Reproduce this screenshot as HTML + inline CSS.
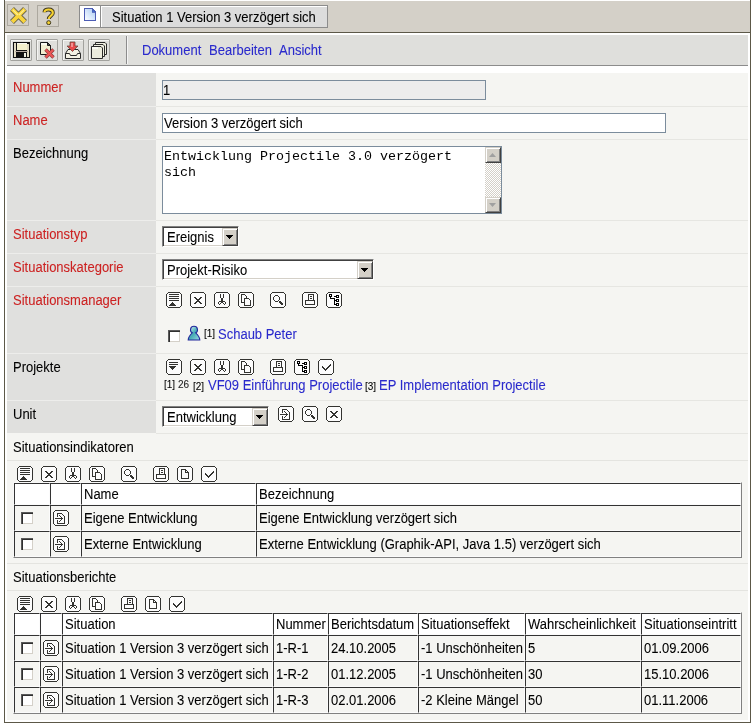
<!DOCTYPE html><html><head><meta charset="utf-8"><style>
html,body{margin:0;padding:0;}
body{width:756px;height:726px;position:relative;overflow:hidden;background:#fff;font-family:"Liberation Sans",sans-serif;font-size:13px;}
div{position:absolute;box-sizing:border-box;}
.t{white-space:nowrap;line-height:16px;will-change:transform;-webkit-text-stroke:0.08px currentColor;transform:scaleY(1.07);transform-origin:0 12px;}
.cb{width:12px;height:12px;background:#fff;border-top:1px solid #5a5a5a;border-left:1px solid #5a5a5a;box-shadow:inset 1px 1px 0 #303030, inset -1px -1px 0 #d4d0c8;}
</style></head><body>
<div style="left:4px;top:0px;width:747px;height:723px;border-left:1px solid #5c5848;border-right:1px solid #5c5848;border-bottom:1px solid #5c5848;"></div>
<div style="left:5px;top:1px;width:745px;height:31px;background:#d4d0c8;"></div>
<div style="left:5px;top:32px;width:745px;height:1px;background:#5c5848;"></div>
<div style="left:7px;top:4px;width:22px;height:22px;border:1px solid #aca89f;"></div>
<svg style="position:absolute;left:10px;top:7px;" width="17" height="17" viewBox="0 0 17 17"><path d="M2 2L15 15M15 2L2 15" stroke="#66604a" stroke-width="5.6"/><path d="M2.2 2.2L14.8 14.8M14.8 2.2L2.2 14.8" stroke="#f8d43c" stroke-width="3.8"/><path d="M3 3L8 8M14 3L9 8" stroke="#fcec90" stroke-width="1.2"/></svg>
<div style="left:37px;top:5px;width:22px;height:22px;border:1px solid #aca89f;"></div>
<svg style="position:absolute;left:39px;top:7px;" width="18" height="18" viewBox="0 0 18 18"><path d="M5.5 5.2C5.5 3.2 7.5 2.5 9.5 2.5S13.8 3.3 13.8 6C13.8 8.6 9.8 9 9.8 12" fill="none" stroke="#3e3820" stroke-width="4"/><path d="M5.5 5.2C5.5 3.2 7.5 2.5 9.5 2.5S13.8 3.3 13.8 6C13.8 8.6 9.8 9 9.8 12" fill="none" stroke="#f6d232" stroke-width="2.2"/><circle cx="9.7" cy="15.7" r="2" fill="#f6d232" stroke="#3e3820" stroke-width="1"/></svg>
<div style="left:79px;top:5px;width:249px;height:23px;border:1px solid #8c8c8c;background:#fff;"></div>
<div style="left:100px;top:6px;width:1px;height:21px;background:#8c8c8c;"></div>
<div style="left:102px;top:7px;width:225px;height:20px;background:#dcdcdc;"></div>
<svg style="position:absolute;left:84px;top:8px;shape-rendering:crispEdges" width="12" height="13" viewBox="0 0 12 13"><defs><linearGradient id="dg" x1="0" y1="1" x2="1" y2="0"><stop offset="0" stop-color="#ffffff"/><stop offset=".45" stop-color="#d8e8fc"/><stop offset="1" stop-color="#a8c8f0"/></linearGradient></defs><path d="M.5 .5h7.5l3.5 3.5v8.5h-11z" fill="url(#dg)" stroke="#4c5cb4"/><path d="M8 .5v3.5h3.5z" fill="#3a74d8" stroke="#4c5cb4" stroke-width=".8"/></svg>
<div class="t" style="left:112px;top:10px;color:#000;font-size:13px;">Situation 1 Version 3 verzögert sich</div>
<div style="left:7px;top:35px;width:741px;height:30px;background:#dfdfdc;"></div>
<div style="left:7px;top:65px;width:741px;height:1px;background:#8c8c8c;"></div>
<div style="left:10px;top:39px;width:22px;height:22px;border:1px solid #a2a29e;border-radius:1px;box-shadow:inset 1px 1px 0 #f4f4f2;"></div>
<div style="left:36px;top:39px;width:22px;height:22px;border:1px solid #a2a29e;border-radius:1px;box-shadow:inset 1px 1px 0 #f4f4f2;"></div>
<div style="left:62px;top:39px;width:22px;height:22px;border:1px solid #a2a29e;border-radius:1px;box-shadow:inset 1px 1px 0 #f4f4f2;"></div>
<div style="left:88px;top:39px;width:22px;height:22px;border:1px solid #a2a29e;border-radius:1px;box-shadow:inset 1px 1px 0 #f4f4f2;"></div>
<svg style="position:absolute;left:13px;top:42px;shape-rendering:crispEdges" width="17" height="16" viewBox="0 0 17 16"><rect x="0" y="0" width="17" height="16" fill="#111"/><rect x="1" y="1" width="2" height="14" fill="#e2dcc4"/><rect x="14" y="2" width="2" height="13" fill="#e2dcc4"/><rect x="4" y="1" width="10" height="7" fill="#f4f0cc"/><rect x="4" y="1" width="10" height="1" fill="#fcfcf4"/><rect x="2" y="9" width="13" height="1" fill="#b8aca4"/><rect x="11" y="11" width="2" height="4" fill="#f0f0e4"/></svg>
<svg style="position:absolute;left:37px;top:40px;" width="21" height="21" viewBox="0 0 21 21"><path d="M3.5 2.5h7l3 3v9h-10z" fill="#f2eed0" stroke="#1a1a1a"/><path d="M4 3h6v2H4z" fill="#fafaf0"/><path d="M10.5 2.5v3h3z" fill="#555" stroke="#1a1a1a"/><path d="M8.5 9.5l8 8M16.5 9.5l-8 8" stroke="#8a3a3a" stroke-width="3.4"/><path d="M8.8 9.8l7.4 7.4M16.2 9.8l-7.4 7.4" stroke="#ec5656" stroke-width="2.2"/></svg>
<svg style="position:absolute;left:63px;top:40px;" width="21" height="21" viewBox="0 0 21 21"><path d="M2.5 13.5L5 9.5H15L17.5 13.5V18.5H2.5z" fill="#f4f2e4" stroke="#2a2a2a"/><path d="M2.5 13.5H6.5L7.5 15.5H13.5L14.5 13.5H17.5" fill="none" stroke="#2a2a2a"/><path d="M7 2H12V6H15L9.5 11.5L4 6H7z" fill="#e84a4a" stroke="#6a4a40" stroke-width=".8"/><path d="M8 3H10V7H8z" fill="#f49090"/></svg>
<svg style="position:absolute;left:89px;top:40px;" width="21" height="21" viewBox="0 0 21 21"><path d="M6.5 2.5H16L17.5 4V14.5H6.5z" fill="#eeeee0" stroke="#2a2a2a"/><path d="M4.5 4.5H14L15.5 6V16.5H4.5z" fill="#eeeee0" stroke="#2a2a2a"/><path d="M2.5 6.5H12L13.5 8V18.5H2.5z" fill="#ebebdc" stroke="#2a2a2a"/><path d="M3 7H9V9H3z" fill="#fafaf4"/></svg>
<div style="left:126px;top:36px;width:1px;height:28px;background:#8c8c8c;"></div>
<div style="left:127px;top:36px;width:1px;height:28px;background:#f4f4f4;"></div>
<div class="t" style="left:142px;top:43px;color:#2a2acc;font-size:13px;">Dokument</div>
<div class="t" style="left:209px;top:43px;color:#2a2acc;font-size:13px;">Bearbeiten</div>
<div class="t" style="left:279px;top:43px;color:#2a2acc;font-size:13px;">Ansicht</div>
<div style="left:7px;top:73px;width:741px;height:360px;background:#e6e6e2;"></div>
<div style="left:7px;top:73px;width:149px;height:33px;background:#e0e0de;"></div>
<div style="left:156px;top:73px;width:592px;height:33px;background:#f5f5f2;"></div>
<div style="left:7px;top:107px;width:149px;height:32px;background:#e0e0de;"></div>
<div style="left:156px;top:107px;width:592px;height:32px;background:#f5f5f2;"></div>
<div style="left:7px;top:140px;width:149px;height:80px;background:#e0e0de;"></div>
<div style="left:156px;top:140px;width:592px;height:80px;background:#f5f5f2;"></div>
<div style="left:7px;top:221px;width:149px;height:32px;background:#e0e0de;"></div>
<div style="left:156px;top:221px;width:592px;height:32px;background:#f5f5f2;"></div>
<div style="left:7px;top:254px;width:149px;height:32px;background:#e0e0de;"></div>
<div style="left:156px;top:254px;width:592px;height:32px;background:#f5f5f2;"></div>
<div style="left:7px;top:287px;width:149px;height:66px;background:#e0e0de;"></div>
<div style="left:156px;top:287px;width:592px;height:66px;background:#f5f5f2;"></div>
<div style="left:7px;top:354px;width:149px;height:46px;background:#e0e0de;"></div>
<div style="left:156px;top:354px;width:592px;height:46px;background:#f5f5f2;"></div>
<div style="left:7px;top:401px;width:149px;height:32px;background:#e0e0de;"></div>
<div style="left:156px;top:401px;width:592px;height:32px;background:#f5f5f2;"></div>
<div style="left:7px;top:106px;width:149px;height:1px;background:#ededeb;"></div>
<div style="left:7px;top:139px;width:149px;height:1px;background:#ededeb;"></div>
<div style="left:7px;top:220px;width:149px;height:1px;background:#ededeb;"></div>
<div style="left:7px;top:253px;width:149px;height:1px;background:#ededeb;"></div>
<div style="left:7px;top:286px;width:149px;height:1px;background:#ededeb;"></div>
<div style="left:7px;top:353px;width:149px;height:1px;background:#ededeb;"></div>
<div style="left:7px;top:400px;width:149px;height:1px;background:#ededeb;"></div>
<div class="t" style="left:13px;top:80px;color:#cc2222;font-size:13px;">Nummer</div>
<div class="t" style="left:13px;top:113px;color:#cc2222;font-size:13px;">Name</div>
<div class="t" style="left:13px;top:146px;color:#000;font-size:13px;">Bezeichnung</div>
<div class="t" style="left:13px;top:227px;color:#cc2222;font-size:13px;">Situationstyp</div>
<div class="t" style="left:13px;top:260px;color:#cc2222;font-size:13px;">Situationskategorie</div>
<div class="t" style="left:13px;top:293px;color:#cc2222;font-size:13px;">Situationsmanager</div>
<div class="t" style="left:13px;top:360px;color:#000;font-size:13px;">Projekte</div>
<div class="t" style="left:13px;top:407px;color:#000;font-size:13px;">Unit</div>
<div style="left:162px;top:80px;width:324px;height:20px;border:1px solid #7b8c9c;background:#ececec;"></div>
<div class="t" style="left:163px;top:83px;color:#000;font-size:13px;">1</div>
<div style="left:162px;top:113px;width:504px;height:20px;border:1px solid #7b8c9c;background:#fff;"></div>
<div class="t" style="left:164px;top:116px;color:#000;font-size:13px;">Version 3 verzögert sich</div>
<div style="left:162px;top:146px;width:340px;height:68px;border:1px solid #7b8c9c;background:#fff;"></div>
<div style="left:164px;top:149px;will-change:transform;font-family:'Liberation Mono',monospace;font-size:13.33px;line-height:16px;white-space:pre;">Entwicklung Projectile 3.0 verzögert
sich</div>
<div style="left:485px;top:147px;width:16px;height:66px;background:repeating-conic-gradient(#d4d0c8 0 25%, #fff 0 50%) 0 0/2px 2px;"></div>
<div style="left:485px;top:147px;width:16px;height:16px;background:#d4d0c8;border-top:1px solid #d4d0c8;border-left:1px solid #d4d0c8;border-right:1px solid #404040;border-bottom:1px solid #404040;box-shadow:inset 1px 1px 0 #fff, inset -1px -1px 0 #808080;"></div>
<svg style="position:absolute;left:485px;top:147px;" width="16" height="16" viewBox="0 0 16 16"><path d="M4 10h7l-3.5-4z" fill="#a0a0a0"/></svg>
<div style="left:485px;top:197px;width:16px;height:16px;background:#d4d0c8;border-top:1px solid #d4d0c8;border-left:1px solid #d4d0c8;border-right:1px solid #404040;border-bottom:1px solid #404040;box-shadow:inset 1px 1px 0 #fff, inset -1px -1px 0 #808080;"></div>
<svg style="position:absolute;left:485px;top:197px;" width="16" height="16" viewBox="0 0 16 16"><path d="M4 6h7l-3.5 4z" fill="#a0a0a0"/></svg>
<div style="left:162px;top:226px;width:77px;height:21px;background:#fff;border-top:1px solid #808080;border-left:1px solid #808080;border-right:1px solid #fff;border-bottom:1px solid #fff;box-shadow:inset 1px 1px 0 #404040, inset -1px -1px 0 #d4d0c8;"></div>
<div style="left:222px;top:228px;width:16px;height:18px;background:#d4d0c8;border-right:1px solid #404040;border-bottom:1px solid #404040;border-top:1px solid #d4d0c8;border-left:1px solid #d4d0c8;box-shadow:inset 1px 1px 0 #fff, inset -1px -1px 0 #808080;"></div>
<svg style="position:absolute;left:222px;top:228px;shape-rendering:crispEdges" width="16" height="18" viewBox="0 0 16 18"><path d="M4 7h7l-3.5 4z" fill="#000"/></svg>
<div class="t" style="left:167px;top:230px;color:#000;font-size:13px;">Ereignis</div>
<div style="left:162px;top:259px;width:212px;height:21px;background:#fff;border-top:1px solid #808080;border-left:1px solid #808080;border-right:1px solid #fff;border-bottom:1px solid #fff;box-shadow:inset 1px 1px 0 #404040, inset -1px -1px 0 #d4d0c8;"></div>
<div style="left:357px;top:261px;width:16px;height:18px;background:#d4d0c8;border-right:1px solid #404040;border-bottom:1px solid #404040;border-top:1px solid #d4d0c8;border-left:1px solid #d4d0c8;box-shadow:inset 1px 1px 0 #fff, inset -1px -1px 0 #808080;"></div>
<svg style="position:absolute;left:357px;top:261px;shape-rendering:crispEdges" width="16" height="18" viewBox="0 0 16 18"><path d="M4 7h7l-3.5 4z" fill="#000"/></svg>
<div class="t" style="left:167px;top:263px;color:#000;font-size:13px;">Projekt-Risiko</div>
<div style="left:162px;top:406px;width:107px;height:21px;background:#fff;border-top:1px solid #808080;border-left:1px solid #808080;border-right:1px solid #fff;border-bottom:1px solid #fff;box-shadow:inset 1px 1px 0 #404040, inset -1px -1px 0 #d4d0c8;"></div>
<div style="left:252px;top:408px;width:16px;height:18px;background:#d4d0c8;border-right:1px solid #404040;border-bottom:1px solid #404040;border-top:1px solid #d4d0c8;border-left:1px solid #d4d0c8;box-shadow:inset 1px 1px 0 #fff, inset -1px -1px 0 #808080;"></div>
<svg style="position:absolute;left:252px;top:408px;shape-rendering:crispEdges" width="16" height="18" viewBox="0 0 16 18"><path d="M4 7h7l-3.5 4z" fill="#000"/></svg>
<div class="t" style="left:167px;top:410px;color:#000;font-size:13px;">Entwicklung</div>
<svg style="position:absolute;left:166px;top:292px;shape-rendering:crispEdges" width="16" height="16" viewBox="0 0 16 16"><path d="M2 1h12v1h1v12h-1v1h-12v-1h-1v-12h1z" fill="#fcfcfc"/><path d="M2 0h12v1h-12zM1 1h1v1h-1zM14 1h1v1h-1zM0 2h1v1h-1zM15 2h1v1h-1zM0 3h1v1h-1zM15 3h1v1h-1zM0 4h1v1h-1zM15 4h1v1h-1zM0 5h1v1h-1zM15 5h1v1h-1zM0 6h1v1h-1zM15 6h1v1h-1zM0 7h1v1h-1zM15 7h1v1h-1zM0 8h1v1h-1zM15 8h1v1h-1zM0 9h1v1h-1zM15 9h1v1h-1zM0 10h1v1h-1zM15 10h1v1h-1zM0 11h1v1h-1zM15 11h1v1h-1zM0 12h1v1h-1zM15 12h1v1h-1zM0 13h1v1h-1zM15 13h1v1h-1zM1 14h1v1h-1zM14 14h1v1h-1zM2 15h12v1h-12z" fill="#333330"/><path d="M3 2h10v1h-10zM3 4h10v1h-10zM3 6h10v1h-10zM3 8h10v1h-10zM6 10h1v1h-1zM5 11h3v1h-3zM4 12h5v1h-5zM3 13h7v1h-7z" fill="#333330"/></svg>
<svg style="position:absolute;left:190px;top:292px;shape-rendering:crispEdges" width="16" height="16" viewBox="0 0 16 16"><path d="M2 1h12v1h1v12h-1v1h-12v-1h-1v-12h1z" fill="#fcfcfc"/><path d="M2 0h12v1h-12zM1 1h1v1h-1zM14 1h1v1h-1zM0 2h1v1h-1zM15 2h1v1h-1zM0 3h1v1h-1zM15 3h1v1h-1zM0 4h1v1h-1zM15 4h1v1h-1zM0 5h1v1h-1zM15 5h1v1h-1zM0 6h1v1h-1zM15 6h1v1h-1zM0 7h1v1h-1zM15 7h1v1h-1zM0 8h1v1h-1zM15 8h1v1h-1zM0 9h1v1h-1zM15 9h1v1h-1zM0 10h1v1h-1zM15 10h1v1h-1zM0 11h1v1h-1zM15 11h1v1h-1zM0 12h1v1h-1zM15 12h1v1h-1zM0 13h1v1h-1zM15 13h1v1h-1zM1 14h1v1h-1zM14 14h1v1h-1zM2 15h12v1h-12z" fill="#333330"/><path d="M4 5h2v1h-2zM10 5h2v1h-2zM5 6h2v1h-2zM9 6h2v1h-2zM6 7h4v1h-4zM7 8h2v1h-2zM6 9h4v1h-4zM5 10h2v1h-2zM9 10h2v1h-2zM4 11h2v1h-2zM10 11h2v1h-2z" fill="#333330"/></svg>
<svg style="position:absolute;left:214px;top:292px;shape-rendering:crispEdges" width="16" height="16" viewBox="0 0 16 16"><path d="M2 1h12v1h1v12h-1v1h-12v-1h-1v-12h1z" fill="#fcfcfc"/><path d="M2 0h12v1h-12zM1 1h1v1h-1zM14 1h1v1h-1zM0 2h1v1h-1zM15 2h1v1h-1zM0 3h1v1h-1zM15 3h1v1h-1zM0 4h1v1h-1zM15 4h1v1h-1zM0 5h1v1h-1zM15 5h1v1h-1zM0 6h1v1h-1zM15 6h1v1h-1zM0 7h1v1h-1zM15 7h1v1h-1zM0 8h1v1h-1zM15 8h1v1h-1zM0 9h1v1h-1zM15 9h1v1h-1zM0 10h1v1h-1zM15 10h1v1h-1zM0 11h1v1h-1zM15 11h1v1h-1zM0 12h1v1h-1zM15 12h1v1h-1zM0 13h1v1h-1zM15 13h1v1h-1zM1 14h1v1h-1zM14 14h1v1h-1zM2 15h12v1h-12z" fill="#333330"/><path d="M6 2h1v1h-1zM9 2h1v1h-1zM6 3h1v1h-1zM9 3h1v1h-1zM6 4h1v1h-1zM9 4h1v1h-1zM6 5h1v1h-1zM9 5h1v1h-1zM7 6h2v1h-2zM7 7h2v1h-2zM7 8h2v1h-2zM5 9h6v1h-6zM4 10h1v1h-1zM7 10h2v1h-2zM11 10h1v1h-1zM4 11h1v1h-1zM6 11h1v1h-1zM9 11h1v1h-1zM11 11h1v1h-1zM5 12h1v1h-1zM10 12h1v1h-1z" fill="#333330"/></svg>
<svg style="position:absolute;left:238px;top:292px;shape-rendering:crispEdges" width="16" height="16" viewBox="0 0 16 16"><path d="M2 1h12v1h1v12h-1v1h-12v-1h-1v-12h1z" fill="#fcfcfc"/><path d="M2 0h12v1h-12zM1 1h1v1h-1zM14 1h1v1h-1zM0 2h1v1h-1zM15 2h1v1h-1zM0 3h1v1h-1zM15 3h1v1h-1zM0 4h1v1h-1zM15 4h1v1h-1zM0 5h1v1h-1zM15 5h1v1h-1zM0 6h1v1h-1zM15 6h1v1h-1zM0 7h1v1h-1zM15 7h1v1h-1zM0 8h1v1h-1zM15 8h1v1h-1zM0 9h1v1h-1zM15 9h1v1h-1zM0 10h1v1h-1zM15 10h1v1h-1zM0 11h1v1h-1zM15 11h1v1h-1zM0 12h1v1h-1zM15 12h1v1h-1zM0 13h1v1h-1zM15 13h1v1h-1zM1 14h1v1h-1zM14 14h1v1h-1zM2 15h12v1h-12z" fill="#333330"/><path d="M3 2h4v1h-4zM3 3h1v1h-1zM7 3h1v1h-1zM3 4h1v1h-1zM8 4h1v1h-1zM3 5h1v1h-1zM8 5h1v1h-1zM3 6h1v1h-1zM6 6h5v1h-5zM3 7h1v1h-1zM6 7h1v1h-1zM11 7h1v1h-1zM3 8h1v1h-1zM6 8h1v1h-1zM12 8h1v1h-1zM3 9h1v1h-1zM6 9h1v1h-1zM12 9h1v1h-1zM3 10h4v1h-4zM12 10h1v1h-1zM6 11h1v1h-1zM12 11h1v1h-1zM6 12h1v1h-1zM12 12h1v1h-1zM6 13h7v1h-7z" fill="#333330"/></svg>
<svg style="position:absolute;left:270px;top:292px;shape-rendering:crispEdges" width="16" height="16" viewBox="0 0 16 16"><path d="M2 1h12v1h1v12h-1v1h-12v-1h-1v-12h1z" fill="#fcfcfc"/><path d="M2 0h12v1h-12zM1 1h1v1h-1zM14 1h1v1h-1zM0 2h1v1h-1zM15 2h1v1h-1zM0 3h1v1h-1zM15 3h1v1h-1zM0 4h1v1h-1zM15 4h1v1h-1zM0 5h1v1h-1zM15 5h1v1h-1zM0 6h1v1h-1zM15 6h1v1h-1zM0 7h1v1h-1zM15 7h1v1h-1zM0 8h1v1h-1zM15 8h1v1h-1zM0 9h1v1h-1zM15 9h1v1h-1zM0 10h1v1h-1zM15 10h1v1h-1zM0 11h1v1h-1zM15 11h1v1h-1zM0 12h1v1h-1zM15 12h1v1h-1zM0 13h1v1h-1zM15 13h1v1h-1zM1 14h1v1h-1zM14 14h1v1h-1zM2 15h12v1h-12z" fill="#333330"/><path d="M5 3h3v1h-3zM4 4h1v1h-1zM8 4h1v1h-1zM3 5h1v1h-1zM9 5h1v1h-1zM3 6h1v1h-1zM9 6h1v1h-1zM3 7h1v1h-1zM9 7h1v1h-1zM4 8h1v1h-1zM8 8h1v1h-1zM5 9h3v1h-3zM9 9h2v1h-2zM9 10h3v1h-3zM10 11h3v1h-3zM11 12h2v1h-2z" fill="#333330"/></svg>
<svg style="position:absolute;left:302px;top:292px;shape-rendering:crispEdges" width="16" height="16" viewBox="0 0 16 16"><path d="M2 1h12v1h1v12h-1v1h-12v-1h-1v-12h1z" fill="#fcfcfc"/><path d="M2 0h12v1h-12zM1 1h1v1h-1zM14 1h1v1h-1zM0 2h1v1h-1zM15 2h1v1h-1zM0 3h1v1h-1zM15 3h1v1h-1zM0 4h1v1h-1zM15 4h1v1h-1zM0 5h1v1h-1zM15 5h1v1h-1zM0 6h1v1h-1zM15 6h1v1h-1zM0 7h1v1h-1zM15 7h1v1h-1zM0 8h1v1h-1zM15 8h1v1h-1zM0 9h1v1h-1zM15 9h1v1h-1zM0 10h1v1h-1zM15 10h1v1h-1zM0 11h1v1h-1zM15 11h1v1h-1zM0 12h1v1h-1zM15 12h1v1h-1zM0 13h1v1h-1zM15 13h1v1h-1zM1 14h1v1h-1zM14 14h1v1h-1zM2 15h12v1h-12z" fill="#333330"/><path d="M6 2h6v1h-6zM6 3h1v1h-1zM11 3h1v1h-1zM6 4h1v1h-1zM8 4h2v1h-2zM11 4h1v1h-1zM6 5h1v1h-1zM11 5h1v1h-1zM6 6h1v1h-1zM8 6h2v1h-2zM11 6h1v1h-1zM6 7h1v1h-1zM11 7h1v1h-1zM3 8h10v1h-10zM3 9h1v1h-1zM12 9h1v1h-1zM3 10h1v1h-1zM12 10h1v1h-1zM3 11h1v1h-1zM12 11h1v1h-1zM3 12h10v1h-10z" fill="#333330"/></svg>
<svg style="position:absolute;left:326px;top:292px;shape-rendering:crispEdges" width="16" height="16" viewBox="0 0 16 16"><path d="M2 1h12v1h1v12h-1v1h-12v-1h-1v-12h1z" fill="#fcfcfc"/><path d="M2 0h12v1h-12zM1 1h1v1h-1zM14 1h1v1h-1zM0 2h1v1h-1zM15 2h1v1h-1zM0 3h1v1h-1zM15 3h1v1h-1zM0 4h1v1h-1zM15 4h1v1h-1zM0 5h1v1h-1zM15 5h1v1h-1zM0 6h1v1h-1zM15 6h1v1h-1zM0 7h1v1h-1zM15 7h1v1h-1zM0 8h1v1h-1zM15 8h1v1h-1zM0 9h1v1h-1zM15 9h1v1h-1zM0 10h1v1h-1zM15 10h1v1h-1zM0 11h1v1h-1zM15 11h1v1h-1zM0 12h1v1h-1zM15 12h1v1h-1zM0 13h1v1h-1zM15 13h1v1h-1zM1 14h1v1h-1zM14 14h1v1h-1zM2 15h12v1h-12z" fill="#333330"/><path d="M3 2h3v1h-3zM3 3h1v1h-1zM5 3h1v1h-1zM10 3h3v1h-3zM3 4h3v1h-3zM8 4h3v1h-3zM12 4h1v1h-1zM4 5h1v1h-1zM10 5h3v1h-3zM4 6h5v1h-5zM8 7h1v1h-1zM10 7h3v1h-3zM8 8h3v1h-3zM12 8h1v1h-1zM8 9h1v1h-1zM10 9h3v1h-3zM8 10h1v1h-1zM8 11h1v1h-1zM10 11h3v1h-3zM8 12h3v1h-3zM12 12h1v1h-1zM10 13h3v1h-3z" fill="#000"/></svg>
<div class="cb" style="left:168px;top:330px"></div>
<svg style="position:absolute;left:187px;top:325px;" width="14" height="16" viewBox="0 0 14 16"><defs><linearGradient id="pg" x1="0" y1="0" x2="1" y2="1"><stop offset="0" stop-color="#f4ffff"/><stop offset=".5" stop-color="#44aab4"/><stop offset="1" stop-color="#9cdce4"/></linearGradient></defs><path d="M5.3 7.8C2.6 6.6 2.8 1.2 7 1.2S11.4 6.6 8.7 7.8C10.6 9.6 12.8 12 12.8 15H1.2C1.2 12 3.4 9.6 5.3 7.8z" fill="url(#pg)" stroke="#22289c" stroke-width="1.1"/></svg>
<div class="t" style="left:204px;top:326px;color:#000;font-size:10px;">[1]</div>
<div class="t" style="left:218px;top:327px;color:#2a2acc;font-size:13px;">Schaub Peter</div>
<svg style="position:absolute;left:166px;top:359px;shape-rendering:crispEdges" width="16" height="16" viewBox="0 0 16 16"><path d="M2 1h12v1h1v12h-1v1h-12v-1h-1v-12h1z" fill="#fcfcfc"/><path d="M2 0h12v1h-12zM1 1h1v1h-1zM14 1h1v1h-1zM0 2h1v1h-1zM15 2h1v1h-1zM0 3h1v1h-1zM15 3h1v1h-1zM0 4h1v1h-1zM15 4h1v1h-1zM0 5h1v1h-1zM15 5h1v1h-1zM0 6h1v1h-1zM15 6h1v1h-1zM0 7h1v1h-1zM15 7h1v1h-1zM0 8h1v1h-1zM15 8h1v1h-1zM0 9h1v1h-1zM15 9h1v1h-1zM0 10h1v1h-1zM15 10h1v1h-1zM0 11h1v1h-1zM15 11h1v1h-1zM0 12h1v1h-1zM15 12h1v1h-1zM0 13h1v1h-1zM15 13h1v1h-1zM1 14h1v1h-1zM14 14h1v1h-1zM2 15h12v1h-12z" fill="#333330"/><path d="M3 3h9v1h-9zM3 5h9v1h-9zM3 7h7v1h-7zM4 8h5v1h-5zM5 9h3v1h-3zM6 10h1v1h-1z" fill="#333330"/></svg>
<svg style="position:absolute;left:190px;top:359px;shape-rendering:crispEdges" width="16" height="16" viewBox="0 0 16 16"><path d="M2 1h12v1h1v12h-1v1h-12v-1h-1v-12h1z" fill="#fcfcfc"/><path d="M2 0h12v1h-12zM1 1h1v1h-1zM14 1h1v1h-1zM0 2h1v1h-1zM15 2h1v1h-1zM0 3h1v1h-1zM15 3h1v1h-1zM0 4h1v1h-1zM15 4h1v1h-1zM0 5h1v1h-1zM15 5h1v1h-1zM0 6h1v1h-1zM15 6h1v1h-1zM0 7h1v1h-1zM15 7h1v1h-1zM0 8h1v1h-1zM15 8h1v1h-1zM0 9h1v1h-1zM15 9h1v1h-1zM0 10h1v1h-1zM15 10h1v1h-1zM0 11h1v1h-1zM15 11h1v1h-1zM0 12h1v1h-1zM15 12h1v1h-1zM0 13h1v1h-1zM15 13h1v1h-1zM1 14h1v1h-1zM14 14h1v1h-1zM2 15h12v1h-12z" fill="#333330"/><path d="M4 5h2v1h-2zM10 5h2v1h-2zM5 6h2v1h-2zM9 6h2v1h-2zM6 7h4v1h-4zM7 8h2v1h-2zM6 9h4v1h-4zM5 10h2v1h-2zM9 10h2v1h-2zM4 11h2v1h-2zM10 11h2v1h-2z" fill="#333330"/></svg>
<svg style="position:absolute;left:214px;top:359px;shape-rendering:crispEdges" width="16" height="16" viewBox="0 0 16 16"><path d="M2 1h12v1h1v12h-1v1h-12v-1h-1v-12h1z" fill="#fcfcfc"/><path d="M2 0h12v1h-12zM1 1h1v1h-1zM14 1h1v1h-1zM0 2h1v1h-1zM15 2h1v1h-1zM0 3h1v1h-1zM15 3h1v1h-1zM0 4h1v1h-1zM15 4h1v1h-1zM0 5h1v1h-1zM15 5h1v1h-1zM0 6h1v1h-1zM15 6h1v1h-1zM0 7h1v1h-1zM15 7h1v1h-1zM0 8h1v1h-1zM15 8h1v1h-1zM0 9h1v1h-1zM15 9h1v1h-1zM0 10h1v1h-1zM15 10h1v1h-1zM0 11h1v1h-1zM15 11h1v1h-1zM0 12h1v1h-1zM15 12h1v1h-1zM0 13h1v1h-1zM15 13h1v1h-1zM1 14h1v1h-1zM14 14h1v1h-1zM2 15h12v1h-12z" fill="#333330"/><path d="M6 2h1v1h-1zM9 2h1v1h-1zM6 3h1v1h-1zM9 3h1v1h-1zM6 4h1v1h-1zM9 4h1v1h-1zM6 5h1v1h-1zM9 5h1v1h-1zM7 6h2v1h-2zM7 7h2v1h-2zM7 8h2v1h-2zM5 9h6v1h-6zM4 10h1v1h-1zM7 10h2v1h-2zM11 10h1v1h-1zM4 11h1v1h-1zM6 11h1v1h-1zM9 11h1v1h-1zM11 11h1v1h-1zM5 12h1v1h-1zM10 12h1v1h-1z" fill="#333330"/></svg>
<svg style="position:absolute;left:238px;top:359px;shape-rendering:crispEdges" width="16" height="16" viewBox="0 0 16 16"><path d="M2 1h12v1h1v12h-1v1h-12v-1h-1v-12h1z" fill="#fcfcfc"/><path d="M2 0h12v1h-12zM1 1h1v1h-1zM14 1h1v1h-1zM0 2h1v1h-1zM15 2h1v1h-1zM0 3h1v1h-1zM15 3h1v1h-1zM0 4h1v1h-1zM15 4h1v1h-1zM0 5h1v1h-1zM15 5h1v1h-1zM0 6h1v1h-1zM15 6h1v1h-1zM0 7h1v1h-1zM15 7h1v1h-1zM0 8h1v1h-1zM15 8h1v1h-1zM0 9h1v1h-1zM15 9h1v1h-1zM0 10h1v1h-1zM15 10h1v1h-1zM0 11h1v1h-1zM15 11h1v1h-1zM0 12h1v1h-1zM15 12h1v1h-1zM0 13h1v1h-1zM15 13h1v1h-1zM1 14h1v1h-1zM14 14h1v1h-1zM2 15h12v1h-12z" fill="#333330"/><path d="M3 2h4v1h-4zM3 3h1v1h-1zM7 3h1v1h-1zM3 4h1v1h-1zM8 4h1v1h-1zM3 5h1v1h-1zM8 5h1v1h-1zM3 6h1v1h-1zM6 6h5v1h-5zM3 7h1v1h-1zM6 7h1v1h-1zM11 7h1v1h-1zM3 8h1v1h-1zM6 8h1v1h-1zM12 8h1v1h-1zM3 9h1v1h-1zM6 9h1v1h-1zM12 9h1v1h-1zM3 10h4v1h-4zM12 10h1v1h-1zM6 11h1v1h-1zM12 11h1v1h-1zM6 12h1v1h-1zM12 12h1v1h-1zM6 13h7v1h-7z" fill="#333330"/></svg>
<svg style="position:absolute;left:270px;top:359px;shape-rendering:crispEdges" width="16" height="16" viewBox="0 0 16 16"><path d="M2 1h12v1h1v12h-1v1h-12v-1h-1v-12h1z" fill="#fcfcfc"/><path d="M2 0h12v1h-12zM1 1h1v1h-1zM14 1h1v1h-1zM0 2h1v1h-1zM15 2h1v1h-1zM0 3h1v1h-1zM15 3h1v1h-1zM0 4h1v1h-1zM15 4h1v1h-1zM0 5h1v1h-1zM15 5h1v1h-1zM0 6h1v1h-1zM15 6h1v1h-1zM0 7h1v1h-1zM15 7h1v1h-1zM0 8h1v1h-1zM15 8h1v1h-1zM0 9h1v1h-1zM15 9h1v1h-1zM0 10h1v1h-1zM15 10h1v1h-1zM0 11h1v1h-1zM15 11h1v1h-1zM0 12h1v1h-1zM15 12h1v1h-1zM0 13h1v1h-1zM15 13h1v1h-1zM1 14h1v1h-1zM14 14h1v1h-1zM2 15h12v1h-12z" fill="#333330"/><path d="M6 2h6v1h-6zM6 3h1v1h-1zM11 3h1v1h-1zM6 4h1v1h-1zM8 4h2v1h-2zM11 4h1v1h-1zM6 5h1v1h-1zM11 5h1v1h-1zM6 6h1v1h-1zM8 6h2v1h-2zM11 6h1v1h-1zM6 7h1v1h-1zM11 7h1v1h-1zM3 8h10v1h-10zM3 9h1v1h-1zM12 9h1v1h-1zM3 10h1v1h-1zM12 10h1v1h-1zM3 11h1v1h-1zM12 11h1v1h-1zM3 12h10v1h-10z" fill="#333330"/></svg>
<svg style="position:absolute;left:294px;top:359px;shape-rendering:crispEdges" width="16" height="16" viewBox="0 0 16 16"><path d="M2 1h12v1h1v12h-1v1h-12v-1h-1v-12h1z" fill="#fcfcfc"/><path d="M2 0h12v1h-12zM1 1h1v1h-1zM14 1h1v1h-1zM0 2h1v1h-1zM15 2h1v1h-1zM0 3h1v1h-1zM15 3h1v1h-1zM0 4h1v1h-1zM15 4h1v1h-1zM0 5h1v1h-1zM15 5h1v1h-1zM0 6h1v1h-1zM15 6h1v1h-1zM0 7h1v1h-1zM15 7h1v1h-1zM0 8h1v1h-1zM15 8h1v1h-1zM0 9h1v1h-1zM15 9h1v1h-1zM0 10h1v1h-1zM15 10h1v1h-1zM0 11h1v1h-1zM15 11h1v1h-1zM0 12h1v1h-1zM15 12h1v1h-1zM0 13h1v1h-1zM15 13h1v1h-1zM1 14h1v1h-1zM14 14h1v1h-1zM2 15h12v1h-12z" fill="#333330"/><path d="M3 2h3v1h-3zM3 3h1v1h-1zM5 3h1v1h-1zM10 3h3v1h-3zM3 4h3v1h-3zM8 4h3v1h-3zM12 4h1v1h-1zM4 5h1v1h-1zM10 5h3v1h-3zM4 6h5v1h-5zM8 7h1v1h-1zM10 7h3v1h-3zM8 8h3v1h-3zM12 8h1v1h-1zM8 9h1v1h-1zM10 9h3v1h-3zM8 10h1v1h-1zM8 11h1v1h-1zM10 11h3v1h-3zM8 12h3v1h-3zM12 12h1v1h-1zM10 13h3v1h-3z" fill="#000"/></svg>
<svg style="position:absolute;left:318px;top:359px;shape-rendering:crispEdges" width="16" height="16" viewBox="0 0 16 16"><path d="M2 1h12v1h1v12h-1v1h-12v-1h-1v-12h1z" fill="#fcfcfc"/><path d="M2 0h12v1h-12zM1 1h1v1h-1zM14 1h1v1h-1zM0 2h1v1h-1zM15 2h1v1h-1zM0 3h1v1h-1zM15 3h1v1h-1zM0 4h1v1h-1zM15 4h1v1h-1zM0 5h1v1h-1zM15 5h1v1h-1zM0 6h1v1h-1zM15 6h1v1h-1zM0 7h1v1h-1zM15 7h1v1h-1zM0 8h1v1h-1zM15 8h1v1h-1zM0 9h1v1h-1zM15 9h1v1h-1zM0 10h1v1h-1zM15 10h1v1h-1zM0 11h1v1h-1zM15 11h1v1h-1zM0 12h1v1h-1zM15 12h1v1h-1zM0 13h1v1h-1zM15 13h1v1h-1zM1 14h1v1h-1zM14 14h1v1h-1zM2 15h12v1h-12z" fill="#333330"/><path d="M12 5h1v1h-1zM11 6h2v1h-2zM4 7h1v1h-1zM10 7h2v1h-2zM4 8h2v1h-2zM9 8h2v1h-2zM5 9h2v1h-2zM8 9h2v1h-2zM6 10h3v1h-3zM7 11h1v1h-1z" fill="#333330"/></svg>
<div class="t" style="left:164px;top:377px;color:#000;font-size:10px;">[1]</div>
<div class="t" style="left:178px;top:377px;color:#222;font-size:10px;">26</div>
<div class="t" style="left:193px;top:379px;color:#000;font-size:10px;">[2]</div>
<div class="t" style="left:208px;top:378px;color:#2a2acc;font-size:13px;">VF09 Einführung Projectile</div>
<div class="t" style="left:365px;top:379px;color:#000;font-size:10px;">[3]</div>
<div class="t" style="left:379px;top:378px;color:#2a2acc;font-size:13px;">EP Implementation Projectile</div>
<svg style="position:absolute;left:278px;top:406px;shape-rendering:crispEdges" width="16" height="16" viewBox="0 0 16 16"><path d="M2 1h12v1h1v12h-1v1h-12v-1h-1v-12h1z" fill="#fcfcfc"/><path d="M2 0h12v1h-12zM1 1h1v1h-1zM14 1h1v1h-1zM0 2h1v1h-1zM15 2h1v1h-1zM0 3h1v1h-1zM15 3h1v1h-1zM0 4h1v1h-1zM15 4h1v1h-1zM0 5h1v1h-1zM15 5h1v1h-1zM0 6h1v1h-1zM15 6h1v1h-1zM0 7h1v1h-1zM15 7h1v1h-1zM0 8h1v1h-1zM15 8h1v1h-1zM0 9h1v1h-1zM15 9h1v1h-1zM0 10h1v1h-1zM15 10h1v1h-1zM0 11h1v1h-1zM15 11h1v1h-1zM0 12h1v1h-1zM15 12h1v1h-1zM0 13h1v1h-1zM15 13h1v1h-1zM1 14h1v1h-1zM14 14h1v1h-1zM2 15h12v1h-12z" fill="#333330"/><path d="M4 3h5v1h-5zM4 4h1v1h-1zM9 4h1v1h-1zM4 5h1v1h-1zM6 5h1v1h-1zM10 5h1v1h-1zM4 6h1v1h-1zM7 6h1v1h-1zM11 6h1v1h-1zM8 7h1v1h-1zM11 7h1v1h-1zM2 8h8v1h-8zM11 8h1v1h-1zM8 9h1v1h-1zM11 9h1v1h-1zM4 10h1v1h-1zM7 10h1v1h-1zM11 10h1v1h-1zM4 11h1v1h-1zM6 11h1v1h-1zM11 11h1v1h-1zM4 12h1v1h-1zM11 12h1v1h-1zM4 13h8v1h-8z" fill="#333330"/></svg>
<svg style="position:absolute;left:302px;top:406px;shape-rendering:crispEdges" width="16" height="16" viewBox="0 0 16 16"><path d="M2 1h12v1h1v12h-1v1h-12v-1h-1v-12h1z" fill="#fcfcfc"/><path d="M2 0h12v1h-12zM1 1h1v1h-1zM14 1h1v1h-1zM0 2h1v1h-1zM15 2h1v1h-1zM0 3h1v1h-1zM15 3h1v1h-1zM0 4h1v1h-1zM15 4h1v1h-1zM0 5h1v1h-1zM15 5h1v1h-1zM0 6h1v1h-1zM15 6h1v1h-1zM0 7h1v1h-1zM15 7h1v1h-1zM0 8h1v1h-1zM15 8h1v1h-1zM0 9h1v1h-1zM15 9h1v1h-1zM0 10h1v1h-1zM15 10h1v1h-1zM0 11h1v1h-1zM15 11h1v1h-1zM0 12h1v1h-1zM15 12h1v1h-1zM0 13h1v1h-1zM15 13h1v1h-1zM1 14h1v1h-1zM14 14h1v1h-1zM2 15h12v1h-12z" fill="#333330"/><path d="M5 3h3v1h-3zM4 4h1v1h-1zM8 4h1v1h-1zM3 5h1v1h-1zM9 5h1v1h-1zM3 6h1v1h-1zM9 6h1v1h-1zM3 7h1v1h-1zM9 7h1v1h-1zM4 8h1v1h-1zM8 8h1v1h-1zM5 9h3v1h-3zM9 9h2v1h-2zM9 10h3v1h-3zM10 11h3v1h-3zM11 12h2v1h-2z" fill="#333330"/></svg>
<svg style="position:absolute;left:326px;top:406px;shape-rendering:crispEdges" width="16" height="16" viewBox="0 0 16 16"><path d="M2 1h12v1h1v12h-1v1h-12v-1h-1v-12h1z" fill="#fcfcfc"/><path d="M2 0h12v1h-12zM1 1h1v1h-1zM14 1h1v1h-1zM0 2h1v1h-1zM15 2h1v1h-1zM0 3h1v1h-1zM15 3h1v1h-1zM0 4h1v1h-1zM15 4h1v1h-1zM0 5h1v1h-1zM15 5h1v1h-1zM0 6h1v1h-1zM15 6h1v1h-1zM0 7h1v1h-1zM15 7h1v1h-1zM0 8h1v1h-1zM15 8h1v1h-1zM0 9h1v1h-1zM15 9h1v1h-1zM0 10h1v1h-1zM15 10h1v1h-1zM0 11h1v1h-1zM15 11h1v1h-1zM0 12h1v1h-1zM15 12h1v1h-1zM0 13h1v1h-1zM15 13h1v1h-1zM1 14h1v1h-1zM14 14h1v1h-1zM2 15h12v1h-12z" fill="#333330"/><path d="M4 5h2v1h-2zM10 5h2v1h-2zM5 6h2v1h-2zM9 6h2v1h-2zM6 7h4v1h-4zM7 8h2v1h-2zM6 9h4v1h-4zM5 10h2v1h-2zM9 10h2v1h-2zM4 11h2v1h-2zM10 11h2v1h-2z" fill="#333330"/></svg>
<div style="left:7px;top:433px;width:741px;height:287px;background:#f5f5f2;"></div>
<div style="left:156px;top:433px;width:592px;height:1px;background:#e6e6e2;"></div>
<div style="left:7px;top:460px;width:741px;height:1px;background:#e4e4e0;"></div>
<div style="left:7px;top:563px;width:741px;height:1px;background:#e4e4e0;"></div>
<div style="left:7px;top:590px;width:741px;height:1px;background:#e4e4e0;"></div>
<div class="t" style="left:13px;top:440px;color:#000;font-size:13px;">Situationsindikatoren</div>
<div class="t" style="left:13px;top:570px;color:#000;font-size:13px;">Situationsberichte</div>
<svg style="position:absolute;left:17px;top:466px;shape-rendering:crispEdges" width="16" height="16" viewBox="0 0 16 16"><path d="M2 1h12v1h1v12h-1v1h-12v-1h-1v-12h1z" fill="#fcfcfc"/><path d="M2 0h12v1h-12zM1 1h1v1h-1zM14 1h1v1h-1zM0 2h1v1h-1zM15 2h1v1h-1zM0 3h1v1h-1zM15 3h1v1h-1zM0 4h1v1h-1zM15 4h1v1h-1zM0 5h1v1h-1zM15 5h1v1h-1zM0 6h1v1h-1zM15 6h1v1h-1zM0 7h1v1h-1zM15 7h1v1h-1zM0 8h1v1h-1zM15 8h1v1h-1zM0 9h1v1h-1zM15 9h1v1h-1zM0 10h1v1h-1zM15 10h1v1h-1zM0 11h1v1h-1zM15 11h1v1h-1zM0 12h1v1h-1zM15 12h1v1h-1zM0 13h1v1h-1zM15 13h1v1h-1zM1 14h1v1h-1zM14 14h1v1h-1zM2 15h12v1h-12z" fill="#333330"/><path d="M3 2h10v1h-10zM3 4h10v1h-10zM3 6h10v1h-10zM3 8h10v1h-10zM6 10h1v1h-1zM5 11h3v1h-3zM4 12h5v1h-5zM3 13h7v1h-7z" fill="#333330"/></svg>
<svg style="position:absolute;left:41px;top:466px;shape-rendering:crispEdges" width="16" height="16" viewBox="0 0 16 16"><path d="M2 1h12v1h1v12h-1v1h-12v-1h-1v-12h1z" fill="#fcfcfc"/><path d="M2 0h12v1h-12zM1 1h1v1h-1zM14 1h1v1h-1zM0 2h1v1h-1zM15 2h1v1h-1zM0 3h1v1h-1zM15 3h1v1h-1zM0 4h1v1h-1zM15 4h1v1h-1zM0 5h1v1h-1zM15 5h1v1h-1zM0 6h1v1h-1zM15 6h1v1h-1zM0 7h1v1h-1zM15 7h1v1h-1zM0 8h1v1h-1zM15 8h1v1h-1zM0 9h1v1h-1zM15 9h1v1h-1zM0 10h1v1h-1zM15 10h1v1h-1zM0 11h1v1h-1zM15 11h1v1h-1zM0 12h1v1h-1zM15 12h1v1h-1zM0 13h1v1h-1zM15 13h1v1h-1zM1 14h1v1h-1zM14 14h1v1h-1zM2 15h12v1h-12z" fill="#333330"/><path d="M4 5h2v1h-2zM10 5h2v1h-2zM5 6h2v1h-2zM9 6h2v1h-2zM6 7h4v1h-4zM7 8h2v1h-2zM6 9h4v1h-4zM5 10h2v1h-2zM9 10h2v1h-2zM4 11h2v1h-2zM10 11h2v1h-2z" fill="#333330"/></svg>
<svg style="position:absolute;left:65px;top:466px;shape-rendering:crispEdges" width="16" height="16" viewBox="0 0 16 16"><path d="M2 1h12v1h1v12h-1v1h-12v-1h-1v-12h1z" fill="#fcfcfc"/><path d="M2 0h12v1h-12zM1 1h1v1h-1zM14 1h1v1h-1zM0 2h1v1h-1zM15 2h1v1h-1zM0 3h1v1h-1zM15 3h1v1h-1zM0 4h1v1h-1zM15 4h1v1h-1zM0 5h1v1h-1zM15 5h1v1h-1zM0 6h1v1h-1zM15 6h1v1h-1zM0 7h1v1h-1zM15 7h1v1h-1zM0 8h1v1h-1zM15 8h1v1h-1zM0 9h1v1h-1zM15 9h1v1h-1zM0 10h1v1h-1zM15 10h1v1h-1zM0 11h1v1h-1zM15 11h1v1h-1zM0 12h1v1h-1zM15 12h1v1h-1zM0 13h1v1h-1zM15 13h1v1h-1zM1 14h1v1h-1zM14 14h1v1h-1zM2 15h12v1h-12z" fill="#333330"/><path d="M6 2h1v1h-1zM9 2h1v1h-1zM6 3h1v1h-1zM9 3h1v1h-1zM6 4h1v1h-1zM9 4h1v1h-1zM6 5h1v1h-1zM9 5h1v1h-1zM7 6h2v1h-2zM7 7h2v1h-2zM7 8h2v1h-2zM5 9h6v1h-6zM4 10h1v1h-1zM7 10h2v1h-2zM11 10h1v1h-1zM4 11h1v1h-1zM6 11h1v1h-1zM9 11h1v1h-1zM11 11h1v1h-1zM5 12h1v1h-1zM10 12h1v1h-1z" fill="#333330"/></svg>
<svg style="position:absolute;left:89px;top:466px;shape-rendering:crispEdges" width="16" height="16" viewBox="0 0 16 16"><path d="M2 1h12v1h1v12h-1v1h-12v-1h-1v-12h1z" fill="#fcfcfc"/><path d="M2 0h12v1h-12zM1 1h1v1h-1zM14 1h1v1h-1zM0 2h1v1h-1zM15 2h1v1h-1zM0 3h1v1h-1zM15 3h1v1h-1zM0 4h1v1h-1zM15 4h1v1h-1zM0 5h1v1h-1zM15 5h1v1h-1zM0 6h1v1h-1zM15 6h1v1h-1zM0 7h1v1h-1zM15 7h1v1h-1zM0 8h1v1h-1zM15 8h1v1h-1zM0 9h1v1h-1zM15 9h1v1h-1zM0 10h1v1h-1zM15 10h1v1h-1zM0 11h1v1h-1zM15 11h1v1h-1zM0 12h1v1h-1zM15 12h1v1h-1zM0 13h1v1h-1zM15 13h1v1h-1zM1 14h1v1h-1zM14 14h1v1h-1zM2 15h12v1h-12z" fill="#333330"/><path d="M3 2h4v1h-4zM3 3h1v1h-1zM7 3h1v1h-1zM3 4h1v1h-1zM8 4h1v1h-1zM3 5h1v1h-1zM8 5h1v1h-1zM3 6h1v1h-1zM6 6h5v1h-5zM3 7h1v1h-1zM6 7h1v1h-1zM11 7h1v1h-1zM3 8h1v1h-1zM6 8h1v1h-1zM12 8h1v1h-1zM3 9h1v1h-1zM6 9h1v1h-1zM12 9h1v1h-1zM3 10h4v1h-4zM12 10h1v1h-1zM6 11h1v1h-1zM12 11h1v1h-1zM6 12h1v1h-1zM12 12h1v1h-1zM6 13h7v1h-7z" fill="#333330"/></svg>
<svg style="position:absolute;left:121px;top:466px;shape-rendering:crispEdges" width="16" height="16" viewBox="0 0 16 16"><path d="M2 1h12v1h1v12h-1v1h-12v-1h-1v-12h1z" fill="#fcfcfc"/><path d="M2 0h12v1h-12zM1 1h1v1h-1zM14 1h1v1h-1zM0 2h1v1h-1zM15 2h1v1h-1zM0 3h1v1h-1zM15 3h1v1h-1zM0 4h1v1h-1zM15 4h1v1h-1zM0 5h1v1h-1zM15 5h1v1h-1zM0 6h1v1h-1zM15 6h1v1h-1zM0 7h1v1h-1zM15 7h1v1h-1zM0 8h1v1h-1zM15 8h1v1h-1zM0 9h1v1h-1zM15 9h1v1h-1zM0 10h1v1h-1zM15 10h1v1h-1zM0 11h1v1h-1zM15 11h1v1h-1zM0 12h1v1h-1zM15 12h1v1h-1zM0 13h1v1h-1zM15 13h1v1h-1zM1 14h1v1h-1zM14 14h1v1h-1zM2 15h12v1h-12z" fill="#333330"/><path d="M5 3h3v1h-3zM4 4h1v1h-1zM8 4h1v1h-1zM3 5h1v1h-1zM9 5h1v1h-1zM3 6h1v1h-1zM9 6h1v1h-1zM3 7h1v1h-1zM9 7h1v1h-1zM4 8h1v1h-1zM8 8h1v1h-1zM5 9h3v1h-3zM9 9h2v1h-2zM9 10h3v1h-3zM10 11h3v1h-3zM11 12h2v1h-2z" fill="#333330"/></svg>
<svg style="position:absolute;left:153px;top:466px;shape-rendering:crispEdges" width="16" height="16" viewBox="0 0 16 16"><path d="M2 1h12v1h1v12h-1v1h-12v-1h-1v-12h1z" fill="#fcfcfc"/><path d="M2 0h12v1h-12zM1 1h1v1h-1zM14 1h1v1h-1zM0 2h1v1h-1zM15 2h1v1h-1zM0 3h1v1h-1zM15 3h1v1h-1zM0 4h1v1h-1zM15 4h1v1h-1zM0 5h1v1h-1zM15 5h1v1h-1zM0 6h1v1h-1zM15 6h1v1h-1zM0 7h1v1h-1zM15 7h1v1h-1zM0 8h1v1h-1zM15 8h1v1h-1zM0 9h1v1h-1zM15 9h1v1h-1zM0 10h1v1h-1zM15 10h1v1h-1zM0 11h1v1h-1zM15 11h1v1h-1zM0 12h1v1h-1zM15 12h1v1h-1zM0 13h1v1h-1zM15 13h1v1h-1zM1 14h1v1h-1zM14 14h1v1h-1zM2 15h12v1h-12z" fill="#333330"/><path d="M6 2h6v1h-6zM6 3h1v1h-1zM11 3h1v1h-1zM6 4h1v1h-1zM8 4h2v1h-2zM11 4h1v1h-1zM6 5h1v1h-1zM11 5h1v1h-1zM6 6h1v1h-1zM8 6h2v1h-2zM11 6h1v1h-1zM6 7h1v1h-1zM11 7h1v1h-1zM3 8h10v1h-10zM3 9h1v1h-1zM12 9h1v1h-1zM3 10h1v1h-1zM12 10h1v1h-1zM3 11h1v1h-1zM12 11h1v1h-1zM3 12h10v1h-10z" fill="#333330"/></svg>
<svg style="position:absolute;left:177px;top:466px;shape-rendering:crispEdges" width="16" height="16" viewBox="0 0 16 16"><path d="M2 1h12v1h1v12h-1v1h-12v-1h-1v-12h1z" fill="#fcfcfc"/><path d="M2 0h12v1h-12zM1 1h1v1h-1zM14 1h1v1h-1zM0 2h1v1h-1zM15 2h1v1h-1zM0 3h1v1h-1zM15 3h1v1h-1zM0 4h1v1h-1zM15 4h1v1h-1zM0 5h1v1h-1zM15 5h1v1h-1zM0 6h1v1h-1zM15 6h1v1h-1zM0 7h1v1h-1zM15 7h1v1h-1zM0 8h1v1h-1zM15 8h1v1h-1zM0 9h1v1h-1zM15 9h1v1h-1zM0 10h1v1h-1zM15 10h1v1h-1zM0 11h1v1h-1zM15 11h1v1h-1zM0 12h1v1h-1zM15 12h1v1h-1zM0 13h1v1h-1zM15 13h1v1h-1zM1 14h1v1h-1zM14 14h1v1h-1zM2 15h12v1h-12z" fill="#333330"/><path d="M4 3h5v1h-5zM4 4h1v1h-1zM8 4h2v1h-2zM4 5h1v1h-1zM8 5h1v1h-1zM10 5h1v1h-1zM4 6h1v1h-1zM8 6h4v1h-4zM4 7h1v1h-1zM11 7h1v1h-1zM4 8h1v1h-1zM11 8h1v1h-1zM4 9h1v1h-1zM11 9h1v1h-1zM4 10h1v1h-1zM11 10h1v1h-1zM4 11h1v1h-1zM11 11h1v1h-1zM4 12h8v1h-8z" fill="#333330"/></svg>
<svg style="position:absolute;left:201px;top:466px;shape-rendering:crispEdges" width="16" height="16" viewBox="0 0 16 16"><path d="M2 1h12v1h1v12h-1v1h-12v-1h-1v-12h1z" fill="#fcfcfc"/><path d="M2 0h12v1h-12zM1 1h1v1h-1zM14 1h1v1h-1zM0 2h1v1h-1zM15 2h1v1h-1zM0 3h1v1h-1zM15 3h1v1h-1zM0 4h1v1h-1zM15 4h1v1h-1zM0 5h1v1h-1zM15 5h1v1h-1zM0 6h1v1h-1zM15 6h1v1h-1zM0 7h1v1h-1zM15 7h1v1h-1zM0 8h1v1h-1zM15 8h1v1h-1zM0 9h1v1h-1zM15 9h1v1h-1zM0 10h1v1h-1zM15 10h1v1h-1zM0 11h1v1h-1zM15 11h1v1h-1zM0 12h1v1h-1zM15 12h1v1h-1zM0 13h1v1h-1zM15 13h1v1h-1zM1 14h1v1h-1zM14 14h1v1h-1zM2 15h12v1h-12z" fill="#333330"/><path d="M12 5h1v1h-1zM11 6h2v1h-2zM4 7h1v1h-1zM10 7h2v1h-2zM4 8h2v1h-2zM9 8h2v1h-2zM5 9h2v1h-2zM8 9h2v1h-2zM6 10h3v1h-3zM7 11h1v1h-1z" fill="#333330"/></svg>
<svg style="position:absolute;left:17px;top:596px;shape-rendering:crispEdges" width="16" height="16" viewBox="0 0 16 16"><path d="M2 1h12v1h1v12h-1v1h-12v-1h-1v-12h1z" fill="#fcfcfc"/><path d="M2 0h12v1h-12zM1 1h1v1h-1zM14 1h1v1h-1zM0 2h1v1h-1zM15 2h1v1h-1zM0 3h1v1h-1zM15 3h1v1h-1zM0 4h1v1h-1zM15 4h1v1h-1zM0 5h1v1h-1zM15 5h1v1h-1zM0 6h1v1h-1zM15 6h1v1h-1zM0 7h1v1h-1zM15 7h1v1h-1zM0 8h1v1h-1zM15 8h1v1h-1zM0 9h1v1h-1zM15 9h1v1h-1zM0 10h1v1h-1zM15 10h1v1h-1zM0 11h1v1h-1zM15 11h1v1h-1zM0 12h1v1h-1zM15 12h1v1h-1zM0 13h1v1h-1zM15 13h1v1h-1zM1 14h1v1h-1zM14 14h1v1h-1zM2 15h12v1h-12z" fill="#333330"/><path d="M3 2h10v1h-10zM3 4h10v1h-10zM3 6h10v1h-10zM3 8h10v1h-10zM6 10h1v1h-1zM5 11h3v1h-3zM4 12h5v1h-5zM3 13h7v1h-7z" fill="#333330"/></svg>
<svg style="position:absolute;left:41px;top:596px;shape-rendering:crispEdges" width="16" height="16" viewBox="0 0 16 16"><path d="M2 1h12v1h1v12h-1v1h-12v-1h-1v-12h1z" fill="#fcfcfc"/><path d="M2 0h12v1h-12zM1 1h1v1h-1zM14 1h1v1h-1zM0 2h1v1h-1zM15 2h1v1h-1zM0 3h1v1h-1zM15 3h1v1h-1zM0 4h1v1h-1zM15 4h1v1h-1zM0 5h1v1h-1zM15 5h1v1h-1zM0 6h1v1h-1zM15 6h1v1h-1zM0 7h1v1h-1zM15 7h1v1h-1zM0 8h1v1h-1zM15 8h1v1h-1zM0 9h1v1h-1zM15 9h1v1h-1zM0 10h1v1h-1zM15 10h1v1h-1zM0 11h1v1h-1zM15 11h1v1h-1zM0 12h1v1h-1zM15 12h1v1h-1zM0 13h1v1h-1zM15 13h1v1h-1zM1 14h1v1h-1zM14 14h1v1h-1zM2 15h12v1h-12z" fill="#333330"/><path d="M4 5h2v1h-2zM10 5h2v1h-2zM5 6h2v1h-2zM9 6h2v1h-2zM6 7h4v1h-4zM7 8h2v1h-2zM6 9h4v1h-4zM5 10h2v1h-2zM9 10h2v1h-2zM4 11h2v1h-2zM10 11h2v1h-2z" fill="#333330"/></svg>
<svg style="position:absolute;left:65px;top:596px;shape-rendering:crispEdges" width="16" height="16" viewBox="0 0 16 16"><path d="M2 1h12v1h1v12h-1v1h-12v-1h-1v-12h1z" fill="#fcfcfc"/><path d="M2 0h12v1h-12zM1 1h1v1h-1zM14 1h1v1h-1zM0 2h1v1h-1zM15 2h1v1h-1zM0 3h1v1h-1zM15 3h1v1h-1zM0 4h1v1h-1zM15 4h1v1h-1zM0 5h1v1h-1zM15 5h1v1h-1zM0 6h1v1h-1zM15 6h1v1h-1zM0 7h1v1h-1zM15 7h1v1h-1zM0 8h1v1h-1zM15 8h1v1h-1zM0 9h1v1h-1zM15 9h1v1h-1zM0 10h1v1h-1zM15 10h1v1h-1zM0 11h1v1h-1zM15 11h1v1h-1zM0 12h1v1h-1zM15 12h1v1h-1zM0 13h1v1h-1zM15 13h1v1h-1zM1 14h1v1h-1zM14 14h1v1h-1zM2 15h12v1h-12z" fill="#333330"/><path d="M6 2h1v1h-1zM9 2h1v1h-1zM6 3h1v1h-1zM9 3h1v1h-1zM6 4h1v1h-1zM9 4h1v1h-1zM6 5h1v1h-1zM9 5h1v1h-1zM7 6h2v1h-2zM7 7h2v1h-2zM7 8h2v1h-2zM5 9h6v1h-6zM4 10h1v1h-1zM7 10h2v1h-2zM11 10h1v1h-1zM4 11h1v1h-1zM6 11h1v1h-1zM9 11h1v1h-1zM11 11h1v1h-1zM5 12h1v1h-1zM10 12h1v1h-1z" fill="#333330"/></svg>
<svg style="position:absolute;left:89px;top:596px;shape-rendering:crispEdges" width="16" height="16" viewBox="0 0 16 16"><path d="M2 1h12v1h1v12h-1v1h-12v-1h-1v-12h1z" fill="#fcfcfc"/><path d="M2 0h12v1h-12zM1 1h1v1h-1zM14 1h1v1h-1zM0 2h1v1h-1zM15 2h1v1h-1zM0 3h1v1h-1zM15 3h1v1h-1zM0 4h1v1h-1zM15 4h1v1h-1zM0 5h1v1h-1zM15 5h1v1h-1zM0 6h1v1h-1zM15 6h1v1h-1zM0 7h1v1h-1zM15 7h1v1h-1zM0 8h1v1h-1zM15 8h1v1h-1zM0 9h1v1h-1zM15 9h1v1h-1zM0 10h1v1h-1zM15 10h1v1h-1zM0 11h1v1h-1zM15 11h1v1h-1zM0 12h1v1h-1zM15 12h1v1h-1zM0 13h1v1h-1zM15 13h1v1h-1zM1 14h1v1h-1zM14 14h1v1h-1zM2 15h12v1h-12z" fill="#333330"/><path d="M3 2h4v1h-4zM3 3h1v1h-1zM7 3h1v1h-1zM3 4h1v1h-1zM8 4h1v1h-1zM3 5h1v1h-1zM8 5h1v1h-1zM3 6h1v1h-1zM6 6h5v1h-5zM3 7h1v1h-1zM6 7h1v1h-1zM11 7h1v1h-1zM3 8h1v1h-1zM6 8h1v1h-1zM12 8h1v1h-1zM3 9h1v1h-1zM6 9h1v1h-1zM12 9h1v1h-1zM3 10h4v1h-4zM12 10h1v1h-1zM6 11h1v1h-1zM12 11h1v1h-1zM6 12h1v1h-1zM12 12h1v1h-1zM6 13h7v1h-7z" fill="#333330"/></svg>
<svg style="position:absolute;left:121px;top:596px;shape-rendering:crispEdges" width="16" height="16" viewBox="0 0 16 16"><path d="M2 1h12v1h1v12h-1v1h-12v-1h-1v-12h1z" fill="#fcfcfc"/><path d="M2 0h12v1h-12zM1 1h1v1h-1zM14 1h1v1h-1zM0 2h1v1h-1zM15 2h1v1h-1zM0 3h1v1h-1zM15 3h1v1h-1zM0 4h1v1h-1zM15 4h1v1h-1zM0 5h1v1h-1zM15 5h1v1h-1zM0 6h1v1h-1zM15 6h1v1h-1zM0 7h1v1h-1zM15 7h1v1h-1zM0 8h1v1h-1zM15 8h1v1h-1zM0 9h1v1h-1zM15 9h1v1h-1zM0 10h1v1h-1zM15 10h1v1h-1zM0 11h1v1h-1zM15 11h1v1h-1zM0 12h1v1h-1zM15 12h1v1h-1zM0 13h1v1h-1zM15 13h1v1h-1zM1 14h1v1h-1zM14 14h1v1h-1zM2 15h12v1h-12z" fill="#333330"/><path d="M6 2h6v1h-6zM6 3h1v1h-1zM11 3h1v1h-1zM6 4h1v1h-1zM8 4h2v1h-2zM11 4h1v1h-1zM6 5h1v1h-1zM11 5h1v1h-1zM6 6h1v1h-1zM8 6h2v1h-2zM11 6h1v1h-1zM6 7h1v1h-1zM11 7h1v1h-1zM3 8h10v1h-10zM3 9h1v1h-1zM12 9h1v1h-1zM3 10h1v1h-1zM12 10h1v1h-1zM3 11h1v1h-1zM12 11h1v1h-1zM3 12h10v1h-10z" fill="#333330"/></svg>
<svg style="position:absolute;left:145px;top:596px;shape-rendering:crispEdges" width="16" height="16" viewBox="0 0 16 16"><path d="M2 1h12v1h1v12h-1v1h-12v-1h-1v-12h1z" fill="#fcfcfc"/><path d="M2 0h12v1h-12zM1 1h1v1h-1zM14 1h1v1h-1zM0 2h1v1h-1zM15 2h1v1h-1zM0 3h1v1h-1zM15 3h1v1h-1zM0 4h1v1h-1zM15 4h1v1h-1zM0 5h1v1h-1zM15 5h1v1h-1zM0 6h1v1h-1zM15 6h1v1h-1zM0 7h1v1h-1zM15 7h1v1h-1zM0 8h1v1h-1zM15 8h1v1h-1zM0 9h1v1h-1zM15 9h1v1h-1zM0 10h1v1h-1zM15 10h1v1h-1zM0 11h1v1h-1zM15 11h1v1h-1zM0 12h1v1h-1zM15 12h1v1h-1zM0 13h1v1h-1zM15 13h1v1h-1zM1 14h1v1h-1zM14 14h1v1h-1zM2 15h12v1h-12z" fill="#333330"/><path d="M4 3h5v1h-5zM4 4h1v1h-1zM8 4h2v1h-2zM4 5h1v1h-1zM8 5h1v1h-1zM10 5h1v1h-1zM4 6h1v1h-1zM8 6h4v1h-4zM4 7h1v1h-1zM11 7h1v1h-1zM4 8h1v1h-1zM11 8h1v1h-1zM4 9h1v1h-1zM11 9h1v1h-1zM4 10h1v1h-1zM11 10h1v1h-1zM4 11h1v1h-1zM11 11h1v1h-1zM4 12h8v1h-8z" fill="#333330"/></svg>
<svg style="position:absolute;left:169px;top:596px;shape-rendering:crispEdges" width="16" height="16" viewBox="0 0 16 16"><path d="M2 1h12v1h1v12h-1v1h-12v-1h-1v-12h1z" fill="#fcfcfc"/><path d="M2 0h12v1h-12zM1 1h1v1h-1zM14 1h1v1h-1zM0 2h1v1h-1zM15 2h1v1h-1zM0 3h1v1h-1zM15 3h1v1h-1zM0 4h1v1h-1zM15 4h1v1h-1zM0 5h1v1h-1zM15 5h1v1h-1zM0 6h1v1h-1zM15 6h1v1h-1zM0 7h1v1h-1zM15 7h1v1h-1zM0 8h1v1h-1zM15 8h1v1h-1zM0 9h1v1h-1zM15 9h1v1h-1zM0 10h1v1h-1zM15 10h1v1h-1zM0 11h1v1h-1zM15 11h1v1h-1zM0 12h1v1h-1zM15 12h1v1h-1zM0 13h1v1h-1zM15 13h1v1h-1zM1 14h1v1h-1zM14 14h1v1h-1zM2 15h12v1h-12z" fill="#333330"/><path d="M12 5h1v1h-1zM11 6h2v1h-2zM4 7h1v1h-1zM10 7h2v1h-2zM4 8h2v1h-2zM9 8h2v1h-2zM5 9h2v1h-2zM8 9h2v1h-2zM6 10h3v1h-3zM7 11h1v1h-1z" fill="#333330"/></svg>
<div style="left:13px;top:482px;width:729px;height:76px;border-top:1px solid #f8f8f8;border-left:1px solid #f8f8f8;border-right:1px solid #808080;border-bottom:1px solid #808080;"></div>
<div style="left:14px;top:483px;width:36px;height:22px;background:#fff;border-top:1px solid #333;border-left:1px solid #333;border-right:1px solid #fbfbfb;border-bottom:1px solid #fbfbfb;"></div>
<div style="left:50px;top:483px;width:31px;height:22px;background:#fff;border-top:1px solid #333;border-left:1px solid #333;border-right:1px solid #fbfbfb;border-bottom:1px solid #fbfbfb;"></div>
<div style="left:81px;top:483px;width:175px;height:22px;background:#fff;border-top:1px solid #333;border-left:1px solid #333;border-right:1px solid #fbfbfb;border-bottom:1px solid #fbfbfb;"></div>
<div style="left:256px;top:483px;width:485px;height:22px;background:#fff;border-top:1px solid #333;border-left:1px solid #333;border-right:1px solid #fbfbfb;border-bottom:1px solid #fbfbfb;"></div>
<div style="left:14px;top:505px;width:36px;height:26px;background:transparent;border-top:1px solid #333;border-left:1px solid #333;border-right:1px solid #fbfbfb;border-bottom:1px solid #fbfbfb;"></div>
<div style="left:50px;top:505px;width:31px;height:26px;background:transparent;border-top:1px solid #333;border-left:1px solid #333;border-right:1px solid #fbfbfb;border-bottom:1px solid #fbfbfb;"></div>
<div style="left:81px;top:505px;width:175px;height:26px;background:transparent;border-top:1px solid #333;border-left:1px solid #333;border-right:1px solid #fbfbfb;border-bottom:1px solid #fbfbfb;"></div>
<div style="left:256px;top:505px;width:485px;height:26px;background:transparent;border-top:1px solid #333;border-left:1px solid #333;border-right:1px solid #fbfbfb;border-bottom:1px solid #fbfbfb;"></div>
<div style="left:14px;top:531px;width:36px;height:26px;background:transparent;border-top:1px solid #333;border-left:1px solid #333;border-right:1px solid #fbfbfb;border-bottom:1px solid #fbfbfb;"></div>
<div style="left:50px;top:531px;width:31px;height:26px;background:transparent;border-top:1px solid #333;border-left:1px solid #333;border-right:1px solid #fbfbfb;border-bottom:1px solid #fbfbfb;"></div>
<div style="left:81px;top:531px;width:175px;height:26px;background:transparent;border-top:1px solid #333;border-left:1px solid #333;border-right:1px solid #fbfbfb;border-bottom:1px solid #fbfbfb;"></div>
<div style="left:256px;top:531px;width:485px;height:26px;background:transparent;border-top:1px solid #333;border-left:1px solid #333;border-right:1px solid #fbfbfb;border-bottom:1px solid #fbfbfb;"></div>
<div class="t" style="left:84px;top:487px;color:#000;font-size:13px;">Name</div>
<div class="t" style="left:259px;top:487px;color:#000;font-size:13px;">Bezeichnung</div>
<div class="cb" style="left:21px;top:512px"></div>
<svg style="position:absolute;left:53px;top:510px;shape-rendering:crispEdges" width="16" height="16" viewBox="0 0 16 16"><path d="M2 1h12v1h1v12h-1v1h-12v-1h-1v-12h1z" fill="#fcfcfc"/><path d="M2 0h12v1h-12zM1 1h1v1h-1zM14 1h1v1h-1zM0 2h1v1h-1zM15 2h1v1h-1zM0 3h1v1h-1zM15 3h1v1h-1zM0 4h1v1h-1zM15 4h1v1h-1zM0 5h1v1h-1zM15 5h1v1h-1zM0 6h1v1h-1zM15 6h1v1h-1zM0 7h1v1h-1zM15 7h1v1h-1zM0 8h1v1h-1zM15 8h1v1h-1zM0 9h1v1h-1zM15 9h1v1h-1zM0 10h1v1h-1zM15 10h1v1h-1zM0 11h1v1h-1zM15 11h1v1h-1zM0 12h1v1h-1zM15 12h1v1h-1zM0 13h1v1h-1zM15 13h1v1h-1zM1 14h1v1h-1zM14 14h1v1h-1zM2 15h12v1h-12z" fill="#333330"/><path d="M4 3h5v1h-5zM4 4h1v1h-1zM9 4h1v1h-1zM4 5h1v1h-1zM6 5h1v1h-1zM10 5h1v1h-1zM4 6h1v1h-1zM7 6h1v1h-1zM11 6h1v1h-1zM8 7h1v1h-1zM11 7h1v1h-1zM2 8h8v1h-8zM11 8h1v1h-1zM8 9h1v1h-1zM11 9h1v1h-1zM4 10h1v1h-1zM7 10h1v1h-1zM11 10h1v1h-1zM4 11h1v1h-1zM6 11h1v1h-1zM11 11h1v1h-1zM4 12h1v1h-1zM11 12h1v1h-1zM4 13h8v1h-8z" fill="#333330"/></svg>
<div class="t" style="left:84px;top:511px;color:#000;font-size:13px;">Eigene Entwicklung</div>
<div class="t" style="left:259px;top:511px;color:#000;font-size:13px;">Eigene Entwicklung verzögert sich</div>
<div class="cb" style="left:21px;top:538px"></div>
<svg style="position:absolute;left:53px;top:536px;shape-rendering:crispEdges" width="16" height="16" viewBox="0 0 16 16"><path d="M2 1h12v1h1v12h-1v1h-12v-1h-1v-12h1z" fill="#fcfcfc"/><path d="M2 0h12v1h-12zM1 1h1v1h-1zM14 1h1v1h-1zM0 2h1v1h-1zM15 2h1v1h-1zM0 3h1v1h-1zM15 3h1v1h-1zM0 4h1v1h-1zM15 4h1v1h-1zM0 5h1v1h-1zM15 5h1v1h-1zM0 6h1v1h-1zM15 6h1v1h-1zM0 7h1v1h-1zM15 7h1v1h-1zM0 8h1v1h-1zM15 8h1v1h-1zM0 9h1v1h-1zM15 9h1v1h-1zM0 10h1v1h-1zM15 10h1v1h-1zM0 11h1v1h-1zM15 11h1v1h-1zM0 12h1v1h-1zM15 12h1v1h-1zM0 13h1v1h-1zM15 13h1v1h-1zM1 14h1v1h-1zM14 14h1v1h-1zM2 15h12v1h-12z" fill="#333330"/><path d="M4 3h5v1h-5zM4 4h1v1h-1zM9 4h1v1h-1zM4 5h1v1h-1zM6 5h1v1h-1zM10 5h1v1h-1zM4 6h1v1h-1zM7 6h1v1h-1zM11 6h1v1h-1zM8 7h1v1h-1zM11 7h1v1h-1zM2 8h8v1h-8zM11 8h1v1h-1zM8 9h1v1h-1zM11 9h1v1h-1zM4 10h1v1h-1zM7 10h1v1h-1zM11 10h1v1h-1zM4 11h1v1h-1zM6 11h1v1h-1zM11 11h1v1h-1zM4 12h1v1h-1zM11 12h1v1h-1zM4 13h8v1h-8z" fill="#333330"/></svg>
<div class="t" style="left:84px;top:537px;color:#000;font-size:13px;">Externe Entwicklung</div>
<div class="t" style="left:259px;top:537px;color:#000;font-size:13px;">Externe Entwicklung (Graphik-API, Java 1.5) verzögert sich</div>
<div style="left:13px;top:612px;width:729px;height:102px;border-top:1px solid #f8f8f8;border-left:1px solid #f8f8f8;border-right:1px solid #808080;border-bottom:1px solid #808080;"></div>
<div style="left:14px;top:613px;width:26px;height:22px;background:#fff;border-top:1px solid #333;border-left:1px solid #333;border-right:1px solid #fbfbfb;border-bottom:1px solid #fbfbfb;"></div>
<div style="left:40px;top:613px;width:22px;height:22px;background:#fff;border-top:1px solid #333;border-left:1px solid #333;border-right:1px solid #fbfbfb;border-bottom:1px solid #fbfbfb;"></div>
<div style="left:62px;top:613px;width:211px;height:22px;background:#fff;border-top:1px solid #333;border-left:1px solid #333;border-right:1px solid #fbfbfb;border-bottom:1px solid #fbfbfb;"></div>
<div style="left:273px;top:613px;width:55px;height:22px;background:#fff;border-top:1px solid #333;border-left:1px solid #333;border-right:1px solid #fbfbfb;border-bottom:1px solid #fbfbfb;"></div>
<div style="left:328px;top:613px;width:90px;height:22px;background:#fff;border-top:1px solid #333;border-left:1px solid #333;border-right:1px solid #fbfbfb;border-bottom:1px solid #fbfbfb;"></div>
<div style="left:418px;top:613px;width:107px;height:22px;background:#fff;border-top:1px solid #333;border-left:1px solid #333;border-right:1px solid #fbfbfb;border-bottom:1px solid #fbfbfb;"></div>
<div style="left:525px;top:613px;width:116px;height:22px;background:#fff;border-top:1px solid #333;border-left:1px solid #333;border-right:1px solid #fbfbfb;border-bottom:1px solid #fbfbfb;"></div>
<div style="left:641px;top:613px;width:100px;height:22px;background:#fff;border-top:1px solid #333;border-left:1px solid #333;border-right:1px solid #fbfbfb;border-bottom:1px solid #fbfbfb;"></div>
<div style="left:14px;top:635px;width:26px;height:26px;background:transparent;border-top:1px solid #333;border-left:1px solid #333;border-right:1px solid #fbfbfb;border-bottom:1px solid #fbfbfb;"></div>
<div style="left:40px;top:635px;width:22px;height:26px;background:transparent;border-top:1px solid #333;border-left:1px solid #333;border-right:1px solid #fbfbfb;border-bottom:1px solid #fbfbfb;"></div>
<div style="left:62px;top:635px;width:211px;height:26px;background:transparent;border-top:1px solid #333;border-left:1px solid #333;border-right:1px solid #fbfbfb;border-bottom:1px solid #fbfbfb;"></div>
<div style="left:273px;top:635px;width:55px;height:26px;background:transparent;border-top:1px solid #333;border-left:1px solid #333;border-right:1px solid #fbfbfb;border-bottom:1px solid #fbfbfb;"></div>
<div style="left:328px;top:635px;width:90px;height:26px;background:transparent;border-top:1px solid #333;border-left:1px solid #333;border-right:1px solid #fbfbfb;border-bottom:1px solid #fbfbfb;"></div>
<div style="left:418px;top:635px;width:107px;height:26px;background:transparent;border-top:1px solid #333;border-left:1px solid #333;border-right:1px solid #fbfbfb;border-bottom:1px solid #fbfbfb;"></div>
<div style="left:525px;top:635px;width:116px;height:26px;background:transparent;border-top:1px solid #333;border-left:1px solid #333;border-right:1px solid #fbfbfb;border-bottom:1px solid #fbfbfb;"></div>
<div style="left:641px;top:635px;width:100px;height:26px;background:transparent;border-top:1px solid #333;border-left:1px solid #333;border-right:1px solid #fbfbfb;border-bottom:1px solid #fbfbfb;"></div>
<div style="left:14px;top:661px;width:26px;height:26px;background:transparent;border-top:1px solid #333;border-left:1px solid #333;border-right:1px solid #fbfbfb;border-bottom:1px solid #fbfbfb;"></div>
<div style="left:40px;top:661px;width:22px;height:26px;background:transparent;border-top:1px solid #333;border-left:1px solid #333;border-right:1px solid #fbfbfb;border-bottom:1px solid #fbfbfb;"></div>
<div style="left:62px;top:661px;width:211px;height:26px;background:transparent;border-top:1px solid #333;border-left:1px solid #333;border-right:1px solid #fbfbfb;border-bottom:1px solid #fbfbfb;"></div>
<div style="left:273px;top:661px;width:55px;height:26px;background:transparent;border-top:1px solid #333;border-left:1px solid #333;border-right:1px solid #fbfbfb;border-bottom:1px solid #fbfbfb;"></div>
<div style="left:328px;top:661px;width:90px;height:26px;background:transparent;border-top:1px solid #333;border-left:1px solid #333;border-right:1px solid #fbfbfb;border-bottom:1px solid #fbfbfb;"></div>
<div style="left:418px;top:661px;width:107px;height:26px;background:transparent;border-top:1px solid #333;border-left:1px solid #333;border-right:1px solid #fbfbfb;border-bottom:1px solid #fbfbfb;"></div>
<div style="left:525px;top:661px;width:116px;height:26px;background:transparent;border-top:1px solid #333;border-left:1px solid #333;border-right:1px solid #fbfbfb;border-bottom:1px solid #fbfbfb;"></div>
<div style="left:641px;top:661px;width:100px;height:26px;background:transparent;border-top:1px solid #333;border-left:1px solid #333;border-right:1px solid #fbfbfb;border-bottom:1px solid #fbfbfb;"></div>
<div style="left:14px;top:687px;width:26px;height:26px;background:transparent;border-top:1px solid #333;border-left:1px solid #333;border-right:1px solid #fbfbfb;border-bottom:1px solid #fbfbfb;"></div>
<div style="left:40px;top:687px;width:22px;height:26px;background:transparent;border-top:1px solid #333;border-left:1px solid #333;border-right:1px solid #fbfbfb;border-bottom:1px solid #fbfbfb;"></div>
<div style="left:62px;top:687px;width:211px;height:26px;background:transparent;border-top:1px solid #333;border-left:1px solid #333;border-right:1px solid #fbfbfb;border-bottom:1px solid #fbfbfb;"></div>
<div style="left:273px;top:687px;width:55px;height:26px;background:transparent;border-top:1px solid #333;border-left:1px solid #333;border-right:1px solid #fbfbfb;border-bottom:1px solid #fbfbfb;"></div>
<div style="left:328px;top:687px;width:90px;height:26px;background:transparent;border-top:1px solid #333;border-left:1px solid #333;border-right:1px solid #fbfbfb;border-bottom:1px solid #fbfbfb;"></div>
<div style="left:418px;top:687px;width:107px;height:26px;background:transparent;border-top:1px solid #333;border-left:1px solid #333;border-right:1px solid #fbfbfb;border-bottom:1px solid #fbfbfb;"></div>
<div style="left:525px;top:687px;width:116px;height:26px;background:transparent;border-top:1px solid #333;border-left:1px solid #333;border-right:1px solid #fbfbfb;border-bottom:1px solid #fbfbfb;"></div>
<div style="left:641px;top:687px;width:100px;height:26px;background:transparent;border-top:1px solid #333;border-left:1px solid #333;border-right:1px solid #fbfbfb;border-bottom:1px solid #fbfbfb;"></div>
<div class="t" style="left:65px;top:617px;color:#000;font-size:13px;">Situation</div>
<div class="t" style="left:276px;top:617px;color:#000;font-size:13px;">Nummer</div>
<div class="t" style="left:331px;top:617px;color:#000;font-size:13px;">Berichtsdatum</div>
<div class="t" style="left:421px;top:617px;color:#000;font-size:13px;">Situationseffekt</div>
<div class="t" style="left:528px;top:617px;color:#000;font-size:13px;">Wahrscheinlichkeit</div>
<div class="t" style="left:644px;top:617px;color:#000;font-size:13px;">Situationseintritt</div>
<div class="cb" style="left:21px;top:642px"></div>
<svg style="position:absolute;left:43px;top:640px;shape-rendering:crispEdges" width="16" height="16" viewBox="0 0 16 16"><path d="M2 1h12v1h1v12h-1v1h-12v-1h-1v-12h1z" fill="#fcfcfc"/><path d="M2 0h12v1h-12zM1 1h1v1h-1zM14 1h1v1h-1zM0 2h1v1h-1zM15 2h1v1h-1zM0 3h1v1h-1zM15 3h1v1h-1zM0 4h1v1h-1zM15 4h1v1h-1zM0 5h1v1h-1zM15 5h1v1h-1zM0 6h1v1h-1zM15 6h1v1h-1zM0 7h1v1h-1zM15 7h1v1h-1zM0 8h1v1h-1zM15 8h1v1h-1zM0 9h1v1h-1zM15 9h1v1h-1zM0 10h1v1h-1zM15 10h1v1h-1zM0 11h1v1h-1zM15 11h1v1h-1zM0 12h1v1h-1zM15 12h1v1h-1zM0 13h1v1h-1zM15 13h1v1h-1zM1 14h1v1h-1zM14 14h1v1h-1zM2 15h12v1h-12z" fill="#333330"/><path d="M4 3h5v1h-5zM4 4h1v1h-1zM9 4h1v1h-1zM4 5h1v1h-1zM6 5h1v1h-1zM10 5h1v1h-1zM4 6h1v1h-1zM7 6h1v1h-1zM11 6h1v1h-1zM8 7h1v1h-1zM11 7h1v1h-1zM2 8h8v1h-8zM11 8h1v1h-1zM8 9h1v1h-1zM11 9h1v1h-1zM4 10h1v1h-1zM7 10h1v1h-1zM11 10h1v1h-1zM4 11h1v1h-1zM6 11h1v1h-1zM11 11h1v1h-1zM4 12h1v1h-1zM11 12h1v1h-1zM4 13h8v1h-8z" fill="#333330"/></svg>
<div class="t" style="left:65px;top:641px;color:#000;font-size:13px;">Situation 1 Version 3 verzögert sich</div>
<div class="t" style="left:276px;top:641px;color:#000;font-size:13px;">1-R-1</div>
<div class="t" style="left:331px;top:641px;color:#000;font-size:13px;">24.10.2005</div>
<div class="t" style="left:421px;top:641px;color:#000;font-size:13px;">-1 Unschönheiten</div>
<div class="t" style="left:528px;top:641px;color:#000;font-size:13px;">5</div>
<div class="t" style="left:644px;top:641px;color:#000;font-size:13px;">01.09.2006</div>
<div class="cb" style="left:21px;top:668px"></div>
<svg style="position:absolute;left:43px;top:666px;shape-rendering:crispEdges" width="16" height="16" viewBox="0 0 16 16"><path d="M2 1h12v1h1v12h-1v1h-12v-1h-1v-12h1z" fill="#fcfcfc"/><path d="M2 0h12v1h-12zM1 1h1v1h-1zM14 1h1v1h-1zM0 2h1v1h-1zM15 2h1v1h-1zM0 3h1v1h-1zM15 3h1v1h-1zM0 4h1v1h-1zM15 4h1v1h-1zM0 5h1v1h-1zM15 5h1v1h-1zM0 6h1v1h-1zM15 6h1v1h-1zM0 7h1v1h-1zM15 7h1v1h-1zM0 8h1v1h-1zM15 8h1v1h-1zM0 9h1v1h-1zM15 9h1v1h-1zM0 10h1v1h-1zM15 10h1v1h-1zM0 11h1v1h-1zM15 11h1v1h-1zM0 12h1v1h-1zM15 12h1v1h-1zM0 13h1v1h-1zM15 13h1v1h-1zM1 14h1v1h-1zM14 14h1v1h-1zM2 15h12v1h-12z" fill="#333330"/><path d="M4 3h5v1h-5zM4 4h1v1h-1zM9 4h1v1h-1zM4 5h1v1h-1zM6 5h1v1h-1zM10 5h1v1h-1zM4 6h1v1h-1zM7 6h1v1h-1zM11 6h1v1h-1zM8 7h1v1h-1zM11 7h1v1h-1zM2 8h8v1h-8zM11 8h1v1h-1zM8 9h1v1h-1zM11 9h1v1h-1zM4 10h1v1h-1zM7 10h1v1h-1zM11 10h1v1h-1zM4 11h1v1h-1zM6 11h1v1h-1zM11 11h1v1h-1zM4 12h1v1h-1zM11 12h1v1h-1zM4 13h8v1h-8z" fill="#333330"/></svg>
<div class="t" style="left:65px;top:667px;color:#000;font-size:13px;">Situation 1 Version 3 verzögert sich</div>
<div class="t" style="left:276px;top:667px;color:#000;font-size:13px;">1-R-2</div>
<div class="t" style="left:331px;top:667px;color:#000;font-size:13px;">01.12.2005</div>
<div class="t" style="left:421px;top:667px;color:#000;font-size:13px;">-1 Unschönheiten</div>
<div class="t" style="left:528px;top:667px;color:#000;font-size:13px;">30</div>
<div class="t" style="left:644px;top:667px;color:#000;font-size:13px;">15.10.2006</div>
<div class="cb" style="left:21px;top:694px"></div>
<svg style="position:absolute;left:43px;top:692px;shape-rendering:crispEdges" width="16" height="16" viewBox="0 0 16 16"><path d="M2 1h12v1h1v12h-1v1h-12v-1h-1v-12h1z" fill="#fcfcfc"/><path d="M2 0h12v1h-12zM1 1h1v1h-1zM14 1h1v1h-1zM0 2h1v1h-1zM15 2h1v1h-1zM0 3h1v1h-1zM15 3h1v1h-1zM0 4h1v1h-1zM15 4h1v1h-1zM0 5h1v1h-1zM15 5h1v1h-1zM0 6h1v1h-1zM15 6h1v1h-1zM0 7h1v1h-1zM15 7h1v1h-1zM0 8h1v1h-1zM15 8h1v1h-1zM0 9h1v1h-1zM15 9h1v1h-1zM0 10h1v1h-1zM15 10h1v1h-1zM0 11h1v1h-1zM15 11h1v1h-1zM0 12h1v1h-1zM15 12h1v1h-1zM0 13h1v1h-1zM15 13h1v1h-1zM1 14h1v1h-1zM14 14h1v1h-1zM2 15h12v1h-12z" fill="#333330"/><path d="M4 3h5v1h-5zM4 4h1v1h-1zM9 4h1v1h-1zM4 5h1v1h-1zM6 5h1v1h-1zM10 5h1v1h-1zM4 6h1v1h-1zM7 6h1v1h-1zM11 6h1v1h-1zM8 7h1v1h-1zM11 7h1v1h-1zM2 8h8v1h-8zM11 8h1v1h-1zM8 9h1v1h-1zM11 9h1v1h-1zM4 10h1v1h-1zM7 10h1v1h-1zM11 10h1v1h-1zM4 11h1v1h-1zM6 11h1v1h-1zM11 11h1v1h-1zM4 12h1v1h-1zM11 12h1v1h-1zM4 13h8v1h-8z" fill="#333330"/></svg>
<div class="t" style="left:65px;top:693px;color:#000;font-size:13px;">Situation 1 Version 3 verzögert sich</div>
<div class="t" style="left:276px;top:693px;color:#000;font-size:13px;">1-R-3</div>
<div class="t" style="left:331px;top:693px;color:#000;font-size:13px;">02.01.2006</div>
<div class="t" style="left:421px;top:693px;color:#000;font-size:13px;">-2 Kleine Mängel</div>
<div class="t" style="left:528px;top:693px;color:#000;font-size:13px;">50</div>
<div class="t" style="left:644px;top:693px;color:#000;font-size:13px;">01.11.2006</div>
</body></html>
